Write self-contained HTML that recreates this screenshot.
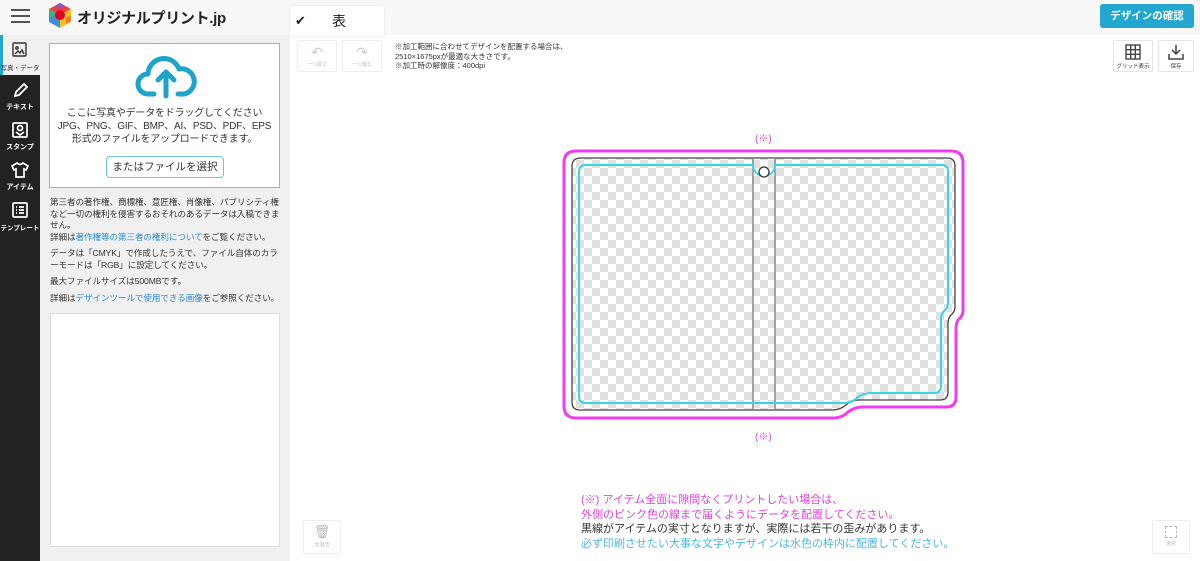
<!DOCTYPE html>
<html><head><meta charset="utf-8"><style>
*{margin:0;padding:0;box-sizing:border-box}
body{width:1200px;height:561px;overflow:hidden;position:relative;background:#fff;font-family:"Liberation Sans","Noto Sans CJK JP",sans-serif;color:#333}
.a{position:absolute}
.hdr{left:0;top:0;width:1200px;height:35px;background:#f7f7f7}
.side{left:0;top:35px;width:40px;height:526px;background:#222}
.tab{width:40px;height:40px;color:#fff;font-size:7px;text-align:center;font-weight:bold}
.panel{left:40px;top:35px;width:250px;height:526px;background:#f0f0f0}
.p{font-size:8.6px;line-height:11.5px;color:#333;letter-spacing:-0.1px}
.lk{color:#2a8ad6}
.btn{background:#fff;border:1px solid #eee;border-radius:2px;font-size:5px;color:#bbb;text-align:center}
</style></head><body>
<div class="a hdr"></div>
<div class="a" style="left:11px;top:9px;width:19px;height:2px;background:#555"></div>
<div class="a" style="left:11px;top:15px;width:19px;height:2px;background:#555"></div>
<div class="a" style="left:11px;top:21px;width:19px;height:2px;background:#555"></div>
<svg class="a" style="left:48px;top:3px" width="24" height="26" viewBox="0 0 24 26">
<polygon points="12,0 23,6 12,12 1,6" fill="#e8443a"/><polygon points="1,6 12,12 12,25 1,19" fill="#3d8fd8"/><polygon points="23,6 12,12 12,25 23,19" fill="#f4c21c"/>
<polygon points="12,0 17,3 12,6 7,3" fill="#9b4fc2"/><polygon points="1,6 6,9 6,15 1,12" fill="#3ab56a"/><polygon points="23,12 18,15 18,21 23,18" fill="#f07a2a"/>
<circle cx="12" cy="12" r="5" fill="#e3001b"/></svg>
<div class="a" style="left:77px;top:7px;font-size:15px;font-weight:bold;color:#222;letter-spacing:-0.3px">オリジナルプリント.jp</div>
<div class="a" style="left:290px;top:6px;width:94px;height:30px;background:#fff;border-radius:3px 3px 0 0;box-shadow:0 0 2px #ddd"></div>
<div class="a" style="left:295px;top:13px;font-size:13px;color:#222">✔</div>
<div class="a" style="left:332px;top:11px;font-size:14px;color:#222">表</div>
<div class="a" style="left:1100px;top:4px;width:94px;height:24px;background:#23a6d0;border-radius:3px;color:#fff;font-size:10.5px;font-weight:bold;text-align:center;line-height:24px">デザインの確認</div>
<div class="a side"></div>
<div class="a" style="left:0;top:35px;width:40px;height:40px;background:#f0f0f0;border-left:3px solid #23a6d0"></div>
<svg class="a" style="left:12px;top:42px" width="15" height="15" viewBox="0 0 15 15" fill="none" stroke="#333" stroke-width="1.4"><rect x="1" y="1" width="13" height="13" rx="1"/><circle cx="5" cy="6" r="1.2"/><path d="M3 12l3-3 2 2 2-3 2 4"/></svg>
<div class="a" style="left:0;top:62px;width:40px;font-size:6.5px;text-align:center;color:#333">写真・データ</div>
<svg class="a" style="left:12px;top:83px" width="16" height="16" viewBox="0 0 16 16" fill="none" stroke="#fff" stroke-width="1.8"><path d="M3 13l1-4 8-8 3 3-8 8z"/></svg>
<div class="a tab" style="left:0;top:102px;height:10px">テキスト</div>
<svg class="a" style="left:12px;top:122px" width="16" height="16" viewBox="0 0 16 16" fill="none" stroke="#fff" stroke-width="1.7"><rect x="1" y="1" width="14" height="14" rx="1"/><circle cx="8" cy="6" r="2.5"/><path d="M4 10l4 3 4-3"/></svg>
<div class="a tab" style="left:0;top:142px;height:10px">スタンプ</div>
<svg class="a" style="left:11px;top:162px" width="18" height="16" viewBox="0 0 18 16" fill="none" stroke="#fff" stroke-width="1.7"><path d="M6 1L1 4l2 4 2-1v8h8V7l2 1 2-4-5-3q-3 3-6 0z"/></svg>
<div class="a tab" style="left:0;top:182px;height:10px">アイテム</div>
<svg class="a" style="left:12px;top:202px" width="16" height="16" viewBox="0 0 16 16" fill="none" stroke="#fff" stroke-width="1.7"><rect x="1" y="1" width="14" height="14" rx="1"/><path d="M4 5h1M7 5h5M4 8h1M7 8h5M4 11h1M7 11h5"/></svg>
<div class="a tab" style="left:0;top:222px;height:10px;font-size:6.5px;white-space:nowrap">テンプレート</div>
<div class="a panel"></div>
<div class="a" style="left:49px;top:43px;width:231px;height:145px;background:#fff;border:1px solid #6fc6dc"></div>
<svg class="a" style="left:135px;top:52px" width="62" height="48" viewBox="0 0 62 48" fill="none" stroke="#1ea3cc" stroke-width="5" stroke-linecap="round" stroke-linejoin="round"><path d="M19 42H13A10 10 0 0 1 13 22 16 16 0 0 1 44 17 10 10 0 0 1 49 42H43"/><path d="M31 44V20M23 28l8-8 8 8"/></svg>
<div class="a" style="left:49px;top:107px;width:231px;text-align:center;font-size:10px;line-height:13px;color:#333;letter-spacing:-0.2px">ここに写真やデータをドラッグしてください<br>JPG、PNG、GIF、BMP、AI、PSD、PDF、EPS<br>形式のファイルをアップロードできます。</div>
<div class="a" style="left:106px;top:156px;width:118px;height:22px;border:1px solid #6fc6dc;border-radius:4px;background:#fff;font-size:10.5px;text-align:center;line-height:20px">またはファイルを選択</div>
<div class="a p" style="left:50px;top:197px;width:234px">第三者の著作権、商標権、意匠権、肖像権、パブリシティ権など一切の権利を侵害するおそれのあるデータは入稿できません。<br>詳細は<span class="lk">著作権等の第三者の権利について</span>をご覧ください。</div>
<div class="a p" style="left:50px;top:248px;width:234px">データは「CMYK」で作成したうえで、ファイル自体のカラーモードは「RGB」に設定してください。</div>
<div class="a p" style="left:50px;top:276px;width:234px">最大ファイルサイズは500MBです。</div>
<div class="a p" style="left:50px;top:293px;width:234px">詳細は<span class="lk">デザインツールで使用できる画像</span>をご参照ください。</div>
<div class="a" style="left:50px;top:313px;width:230px;height:234px;background:#fff;border:1px solid #ddd"></div>
<div class="a btn" style="left:297px;top:40px;width:40px;height:32px"><div style="font-size:14px;color:#ccc;line-height:18px;margin-top:2px">↶</div>一つ戻す</div>
<div class="a btn" style="left:342px;top:40px;width:40px;height:32px"><div style="font-size:14px;color:#ccc;line-height:18px;margin-top:2px">↷</div>一つ進む</div>
<div class="a" style="left:395px;top:42px;font-size:7.5px;line-height:9.5px;color:#333">※加工範囲に合わせてデザインを配置する場合は、<br>2510×1675pxが最適な大きさです。<br>※加工時の解像度：400dpi</div>
<div class="a btn" style="left:1113px;top:40px;width:40px;height:32px;color:#333;font-size:5.5px;border-color:#e5e5e5">
<svg width="16" height="16" viewBox="0 0 16 16" style="margin-top:3px" fill="none" stroke="#444" stroke-width="1.4"><rect x="1" y="1" width="14" height="14"/><path d="M5.7 1v14M10.3 1v14M1 5.7h14M1 10.3h14"/></svg><br>グリッド表示</div>
<div class="a btn" style="left:1158px;top:40px;width:36px;height:32px;color:#333;font-size:5.5px;border-color:#e5e5e5">
<svg width="16" height="16" viewBox="0 0 16 16" style="margin-top:3px" fill="none" stroke="#444" stroke-width="1.5"><path d="M8 1v9M4 6l4 4 4-4M1 10v5h14v-5"/></svg><br>保存</div>
<div class="a btn" style="left:303px;top:520px;width:38px;height:34px"><div style="font-size:13px;color:#bbb;line-height:18px;margin-top:2px">🗑</div>全消去</div>
<div class="a btn" style="left:1152px;top:520px;width:38px;height:34px"><div style="width:12px;height:12px;border:1px dashed #bbb;margin:5px auto 2px"></div>選択</div>
<div class="a" style="left:755px;top:130px;font-size:10px;color:#e040e0">(※)</div>
<div class="a" style="left:755px;top:428px;font-size:10px;color:#e040e0">(※)</div>
<svg class="a" style="left:0;top:0" width="1200" height="561">
<defs><pattern id="ck" x="0" y="0" width="16" height="16" patternUnits="userSpaceOnUse"><rect width="16" height="16" fill="#fff"/><rect width="8" height="8" fill="#e0e0e0"/><rect x="8" y="8" width="8" height="8" fill="#e0e0e0"/></pattern></defs>
<path d="M576,151 H951 Q963,151 963,163 V310 Q963,316 959,319 Q956,322 956,329 V397 Q956,407 946,407 H862 Q855,407 848,412 Q842,418 834,418 H576 Q564,418 564,406 V163 Q564,151 576,151 Z" fill="#fff" stroke="#f03cf0" stroke-width="3"/>
<path d="M581,158 H947 Q955,158 955,166 V307 Q955,312 951,315 Q948,318 948,324 V392 Q948,400 940,400 H859 Q852,400 846,405 Q840,410 832,410 H580 Q572,410 572,402 V166 Q572,158 581,158 Z" fill="url(#ck)" stroke="#444" stroke-width="1.3"/>
<path d="M753,158V410M775,158V410" stroke="#888" stroke-width="1.5"/>
<path d="M586,165 H753 A11,11 0 0 0 775,165 H942 Q948,165 948,171 V302 Q948,308 944,311 Q941,314 941,320 V386 Q941,393 934,393 H871 Q864,393 858,397 Q852,403 845,403 H586 Q579,403 579,396 V172 Q579,165 586,165 Z" fill="none" stroke="#3ad6e0" stroke-width="2"/>
<circle cx="764" cy="172" r="5" fill="#fff" stroke="#333" stroke-width="1.3"/>
</svg>
<div class="a" style="left:581px;top:493px;font-size:11px;line-height:14.5px;color:#e040e0">(※) アイテム全面に隙間なくプリントしたい場合は、<br>外側のピンク色の線まで届くようにデータを配置してください。<br><span style="color:#333">黒線がアイテムの実寸となりますが、実際には若干の歪みがあります。</span><br><span style="color:#49b8e6">必ず印刷させたい大事な文字やデザインは水色の枠内に配置してください。</span></div>
</body></html>
